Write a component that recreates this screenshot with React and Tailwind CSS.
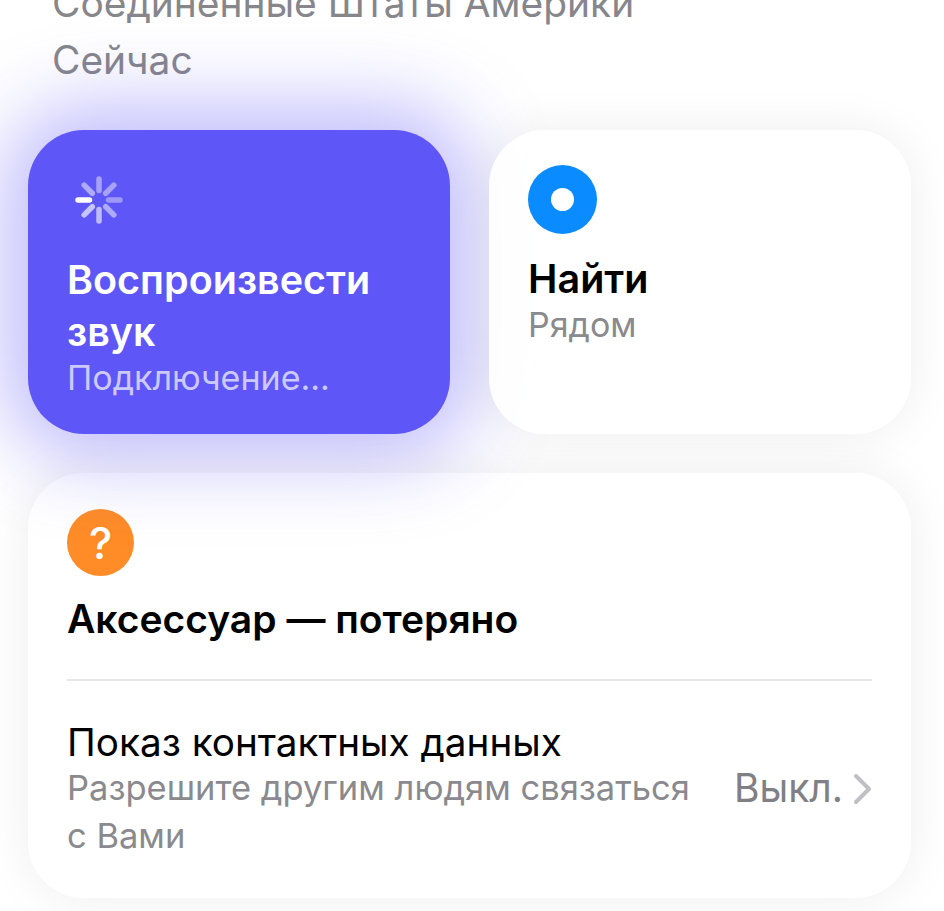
import React from 'react';

const Spinner = () => {
  const spokes = [
    { a: 270, o: 1 },
    { a: 315, o: 0.5 },
    { a: 0, o: 0.45 },
    { a: 45, o: 0.45 },
    { a: 90, o: 0.4 },
    { a: 135, o: 0.5 },
    { a: 180, o: 0.6 },
    { a: 225, o: 0.65 },
  ];
  return (
    <svg width="50" height="50" viewBox="0 0 50 50" fill="none" className="ml-[7px]">
      {spokes.map((s) => (
        <line
          key={s.a}
          x1="25"
          y1="15.5"
          x2="25"
          y2="4"
          transform={`rotate(${s.a} 25 25)`}
          stroke="#fff"
          strokeOpacity={s.o}
          strokeWidth="5.5"
          strokeLinecap="round"
        />
      ))}
    </svg>
  );
};

const App = () => {
  return (
    <div className="h-[911px] overflow-hidden bg-white font-['Inter','Noto_Sans',sans-serif] antialiased">
      <div className="pl-[28px] pr-[33px]">
        {/* Header */}
        <div className="pl-6 -mt-[26px] leading-[58px] text-[#86868b]">
          <div className="whitespace-nowrap text-[38.9px]">Соединенные Штаты Америки</div>
          <div className="-mt-[1px] text-[38.9px]">Сейчас</div>
        </div>

        {/* Action cards */}
        <div className="mt-[41px] grid grid-cols-2 gap-[39px]">
          <div className="h-[304px] rounded-[56px] bg-[#5e56f6] pl-[39px] pt-[45px] shadow-[0_0_80px_24px_rgba(94,86,246,0.4)]">
            <Spinner />
            <div className="mt-[29px] text-[39.5px] font-semibold leading-[52px] text-white">
              Воспроизвести<br />звук
            </div>
            <div className="text-[34px] leading-[40px] text-white/70">Подключение...</div>
          </div>

          <div className="h-[304px] rounded-[56px] bg-white/90 pl-[39px] pt-[35px] shadow-[0_0_50px_rgba(0,0,0,0.07)]">
            <div className="flex h-[69px] w-[69px] items-center justify-center rounded-full bg-[#0a8bff]">
              <div className="h-[23px] w-[23px] rounded-full bg-white" />
            </div>
            <div className="mt-[19px] text-[39.5px] font-semibold leading-[52px] text-black">Найти</div>
            <div className="text-[34px] leading-[40px] text-[#8a8a8e]">Рядом</div>
          </div>
        </div>

        {/* Accessory card */}
        <div className="mt-[39px] h-[425px] rounded-[56px] bg-white/90 px-[39px] pt-[36px] shadow-[0_0_50px_rgba(0,0,0,0.07)]">
          <div className="flex h-[67px] w-[67px] items-center justify-center rounded-full bg-[#ff8c26] text-[44px] font-medium text-white">
            ?
          </div>
          <div className="mt-[17px] whitespace-nowrap text-[39px] font-semibold leading-[52px] text-black">
            Аксессуар — потеряно
          </div>
          <div className="mt-[34px] h-[2px] bg-[#e6e6e8]" />
          <div className="mt-[36px] flex items-center justify-between">
            <div>
              <div className="whitespace-nowrap text-[38.7px] leading-[50px] text-black">Показ контактных данных</div>
              <div className="-mt-[3px] whitespace-nowrap text-[34.5px] leading-[48px] text-[#8a8a8e]">
                Разрешите другим людям связаться<br />с Вами
              </div>
            </div>
            <div className="flex items-center gap-[11px]">
              <span className="whitespace-nowrap text-[39px] text-[#808084]">Выкл.</span>
              <svg width="18" height="32" viewBox="0 0 18 32" fill="none">
                <path d="M2 3l13 13L2 29" stroke="#c0c0c4" strokeWidth="4" strokeLinecap="round" strokeLinejoin="round" />
              </svg>
            </div>
          </div>
        </div>
      </div>
    </div>
  );
};

export default App;
